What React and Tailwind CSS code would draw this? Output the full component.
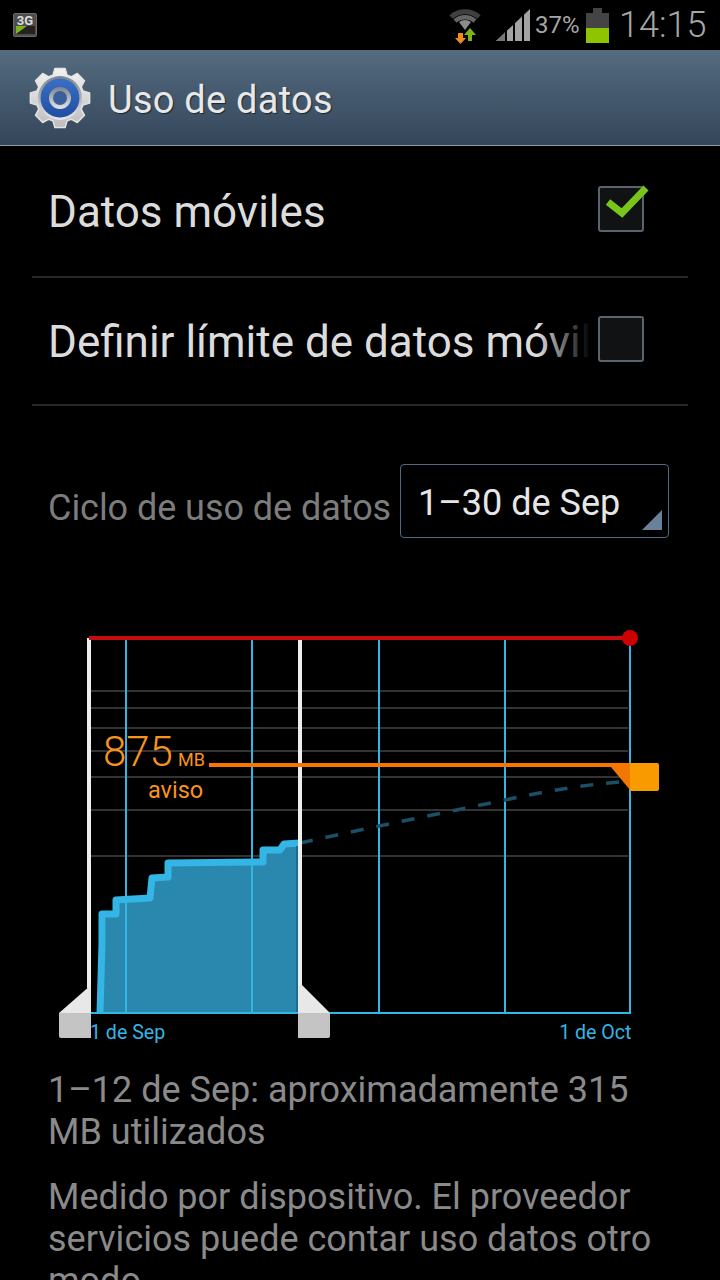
import React from "react";

// 8 tooth gear outline around 0,0
const gearPoints = () => {
  const pts = [];
  for (let i = 0; i < 8; i++) {
    const a = (i * Math.PI) / 4 - Math.PI / 2;
    [[-0.3, 24], [-0.17, 30], [0.17, 30], [0.3, 24]].forEach(([d, r]) => {
      pts.push(`${(Math.cos(a + d) * r).toFixed(1)},${(Math.sin(a + d) * r).toFixed(1)}`);
    });
  }
  return pts.join(" ");
};

const GearIcon = () => (
  <svg width="62" height="62" viewBox="-31 -31 62 62">
    <defs>
      <linearGradient id="silver" x1="0" y1="0" x2="0" y2="1">
        <stop offset="0" stopColor="#f2f2f2" />
        <stop offset="1" stopColor="#bdbdbd" />
      </linearGradient>
      <linearGradient id="ring" x1="0" y1="0" x2="0" y2="1">
        <stop offset="0" stopColor="#7d848c" />
        <stop offset="1" stopColor="#e6e6e6" />
      </linearGradient>
      <linearGradient id="blue" x1="0" y1="0" x2="0" y2="1">
        <stop offset="0" stopColor="#3a70c4" />
        <stop offset="1" stopColor="#1f4ea3" />
      </linearGradient>
    </defs>
    <polygon points={gearPoints()} fill="url(#silver)" stroke="#e4e4e4" strokeLinejoin="round" strokeWidth="1.5" />
    <circle r="22" fill="url(#ring)" />
    <circle r="19.5" fill="url(#blue)" />
    <circle r="11" fill="url(#ring)" />
    <circle r="7" fill="#3a5f9c" />
  </svg>
);

const NetIcon = () => (
  <div className="relative w-[24px] h-[24px] rounded-[2px] bg-[#4d4d4d] border border-[#6a6a6a] overflow-hidden">
    <div className="text-center text-[13px] leading-[14px] font-bold text-[#dcdcdc]">3G</div>
    <svg className="absolute left-[2px] bottom-[2px]" width="19" height="8" viewBox="0 0 19 8">
      <rect width="19" height="8" fill="#222" />
      <polygon points="0,8 11,0 0,0" fill="#7ab51d" />
    </svg>
  </div>
);

const WifiIcon = () => (
  <svg width="36" height="44" viewBox="447 2 36 44">
    <g fill="none">
      <path d="M451 16 A21 21 0 0 1 479 16" stroke="#3f3f3f" strokeWidth="5" />
      <path d="M455 20 A15 15 0 0 1 475 20" stroke="#666" strokeWidth="4.5" />
    </g>
    <path d="M465 29 L459 21 A10 10 0 0 1 471 21 Z" fill="#8c8c8c" />
    <polygon points="458,32 463,32 463,37 466,37 460.5,43 455,37 458,37" fill="#f08a1d" />
    <polygon points="468,40 472,40 472,34 476,34 470,27 464,34 468,34" fill="#7eb414" />
  </svg>
);

const SignalIcon = () => (
  <svg width="34" height="32" viewBox="496 10 34 32">
    <polygon points="496,42 530,10 530,42" fill="#a3a3a3" />
    <polygon points="496,42 505,33.5 505,42" fill="#777" />
    <rect x="505" y="10" width="2" height="32" fill="#000" />
    <rect x="513" y="10" width="2" height="32" fill="#000" />
    <rect x="522" y="10" width="2" height="32" fill="#000" />
  </svg>
);

const BatteryIcon = () => (
  <div className="flex flex-col items-center w-[23px]">
    <div className="w-[9px] h-[5px] bg-[#444]" />
    <div className="w-full h-[15px] bg-[#444]" />
    <div className="w-full h-[15px] bg-[#8fc400]" />
  </div>
);

const StatusBar = () => (
  <div className="h-[50px] bg-black flex items-center pl-[13px]">
    <NetIcon />
    <div className="ml-auto flex items-center">
      <WifiIcon />
      <div className="ml-[13px]"><SignalIcon /></div>
      <span className="ml-[5px] w-[45px] text-[24px] leading-[30px] text-[#a6a6a6]">37%</span>
      <div className="ml-[6px]"><BatteryIcon /></div>
      <span className="ml-[10px] w-[101px] text-[36px] leading-[40px] font-light text-[#a6a6a6]">14:15</span>
    </div>
  </div>
);

const ActionBar = () => (
  <div className="h-[96px] flex items-center pl-[29px] bg-gradient-to-b from-[#546b80] to-[#35465a] border-b border-[#8a9baa]">
    <GearIcon />
    <span className="ml-[17px] pt-[6px] text-[38px] tracking-[0.25px] text-[#e8e8e8] [text-shadow:1px_1px_1px_#1c2630]">Uso de datos</span>
  </div>
);

const Checkbox = ({ checked }) => (
  <div className="relative w-[46px] h-[46px] shrink-0 rounded-[3px] border-2 border-[#5b646d] bg-[#101214]">
    {checked && (
      <svg className="absolute left-[-2px] top-[-2px] overflow-visible" width="46" height="46" viewBox="598 186 46 46">
        <polyline points="608,202 622,213 646,188" fill="none" stroke="#7ac51a" strokeWidth="7" />
      </svg>
    )}
  </div>
);

const CheckRow = ({ label, checked, className }) => (
  <div className={`mx-[32px] pl-[16px] flex items-center border-b-2 border-[#262626] ${className}`}>
    <div className="relative w-[542px] overflow-hidden whitespace-nowrap pt-[2px] text-[44px] leading-[56px] text-[#dcdcdc]">
      {label}
      <div className="absolute right-0 top-0 bottom-0 w-[52px] bg-gradient-to-r from-transparent to-black" />
    </div>
    <div className="ml-[8px] -mt-[5px]"><Checkbox checked={checked} /></div>
  </div>
);

const CycleRow = () => (
  <div className="mt-[58px] flex items-center pl-[48px]">
    <span className="w-[352px] whitespace-nowrap pt-[14px] text-[36px] tracking-[-0.05px] text-[#7c7c7c]">Ciclo de uso de datos</span>
    <div className="relative w-[269px] h-[74px] rounded-[4px] border border-[#4c6a84] flex items-center pl-[17px]">
      <span className="pt-[4px] text-[36px] text-[#e6e6e6]">1–30 de Sep</span>
      <svg className="absolute right-[6px] bottom-[7px]" width="20" height="20" viewBox="0 0 20 20">
        <polygon points="20,0 20,20 0,20" fill="#6a8299" />
      </svg>
    </div>
  </div>
);

const gridYs = [691, 708, 728, 751, 777, 810, 856];
const monthXs = [126, 252, 379, 505, 630];
const usage = "100,1013 102,943 102,914 116,914 116,900 150,898 152,878 168,877 168,863 263,862 263,850 280,850 284,844 300,843";

const Chart = () => (
  <svg className="mt-[82px] block" width="720" height="430" viewBox="0 620 720 430">
    {gridYs.map((y) => (
      <line key={y} x1="91" x2="628" y1={y} y2={y} stroke="#333" strokeWidth="2" />
    ))}
    <polygon points={`91,1013 ${usage} 300,1013`} fill="#2a87ae" />
    {monthXs.map((x) => (
      <line key={x} x1={x} x2={x} y1="638" y2="1013" stroke="#33b5e5" strokeWidth="2" />
    ))}
    <line x1="91" x2="631" y1="1013" y2="1013" stroke="#33b5e5" strokeWidth="2" />
    <polyline points={usage} fill="none" stroke="#33b5e5" strokeWidth="7" strokeLinejoin="round" />
    <rect x="296" y="846" width="2" height="166" fill="#1f6c8e" />
    <path d="M300 843 L379 826 L505 800 C550 790 590 784 630 781" fill="none" stroke="#1a4f66" strokeWidth="3.5" strokeDasharray="13 13" />

    <rect x="87" y="638" width="4" height="350" fill="#eeeeee" />
    <rect x="298" y="638" width="4" height="350" fill="#eeeeee" />
    <polygon points="91,985 91,1013 59,1013" fill="#e8e8e8" />
    <polygon points="298,985 302,985 330,1013 298,1013" fill="#e8e8e8" />
    <path d="M59 1013 H91 V1038 H61 Q59 1038 59 1036 Z" fill="#c4c4c4" />
    <path d="M298 1013 H330 V1036 Q330 1038 328 1038 H298 Z" fill="#c4c4c4" />

    <line x1="89" x2="630" y1="638" y2="638" stroke="#c40d0d" strokeWidth="4" />
    <circle cx="630" cy="638" r="8" fill="#cc0000" />

    <line x1="209" x2="632" y1="765" y2="765" stroke="#f97500" strokeWidth="4" />
    <polygon points="611,767 630,767 630,790" fill="#f27700" />
    <path d="M630 763 H657 Q659 763 659 765 V789 Q659 791 657 791 H630 Z" fill="#f99a00" />

    <g className="[font-family:Roboto,sans-serif]">
      <text x="103" y="766" fontSize="42" fontWeight="300" fill="#f8931e">875</text>
      <text x="178" y="766" fontSize="18" fill="#f8931e">MB</text>
      <text x="148" y="798" fontSize="23.5" fill="#f8931e">aviso</text>
      <text x="90" y="1039" fontSize="19.6" fill="#33b5e5">1 de Sep</text>
      <text x="631.5" y="1039" fontSize="19.6" textAnchor="end" fill="#33b5e5">1 de Oct</text>
    </g>
  </svg>
);

export default function App() {
  return (
    <div className="w-[720px] h-[1280px] overflow-hidden bg-black [font-family:Roboto,sans-serif]">
      <StatusBar />
      <ActionBar />
      <CheckRow label="Datos móviles" checked className="h-[132px]" />
      <CheckRow label="Definir límite de datos móviles" className="h-[128px]" />
      <CycleRow />
      <Chart />
      <div className="pl-[48px] pt-[19px] text-[36px] leading-[42px] text-[#8a8a8a] whitespace-nowrap">
        <p>1–12 de Sep: aproximadamente 315<br />MB utilizados</p>
        <p className="mt-[23px]">Medido por dispositivo. El proveedor<br />servicios puede contar uso datos otro<br />modo.</p>
      </div>
    </div>
  );
}
